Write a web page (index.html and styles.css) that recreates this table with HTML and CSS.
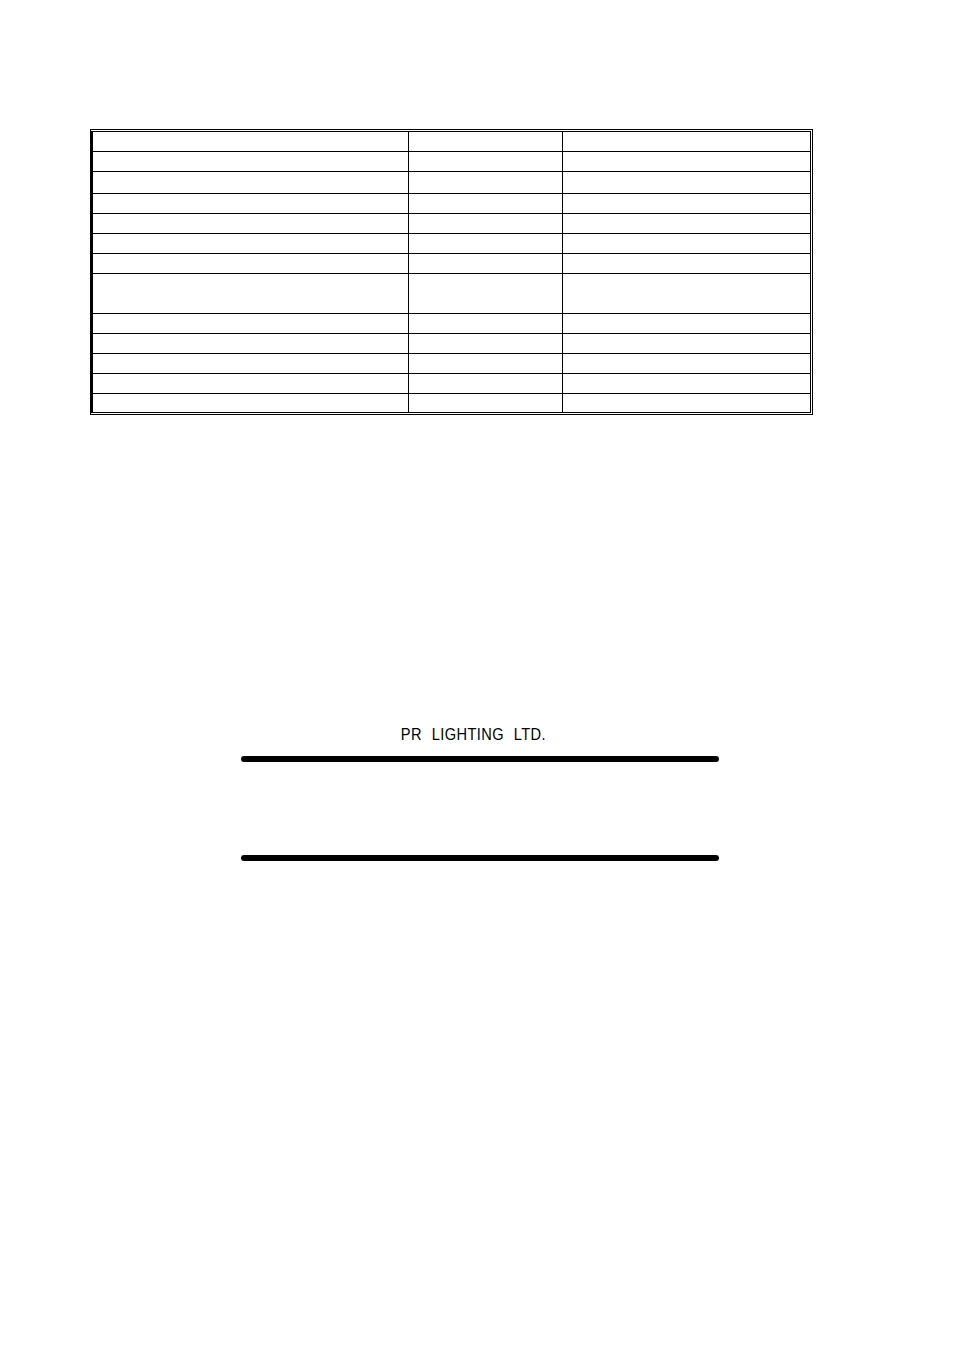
FILE: index.html
```html
<!DOCTYPE html>
<html>
<head>
<meta charset="utf-8">
<link rel="stylesheet" href="styles.css">
</head>
<body>
<div class="frame">
  <div class="grid">
    <div class="row r19"><div class="c1"></div><div class="c2"></div><div class="c3"></div></div>
    <div class="row r19"><div class="c1"></div><div class="c2"></div><div class="c3"></div></div>
    <div class="row r21"><div class="c1"></div><div class="c2"></div><div class="c3"></div></div>
    <div class="row r19"><div class="c1"></div><div class="c2"></div><div class="c3"></div></div>
    <div class="row r19"><div class="c1"></div><div class="c2"></div><div class="c3"></div></div>
    <div class="row r19"><div class="c1"></div><div class="c2"></div><div class="c3"></div></div>
    <div class="row r19"><div class="c1"></div><div class="c2"></div><div class="c3"></div></div>
    <div class="row r39"><div class="c1"></div><div class="c2"></div><div class="c3"></div></div>
    <div class="row r19"><div class="c1"></div><div class="c2"></div><div class="c3"></div></div>
    <div class="row r19"><div class="c1"></div><div class="c2"></div><div class="c3"></div></div>
    <div class="row r19"><div class="c1"></div><div class="c2"></div><div class="c3"></div></div>
    <div class="row r19"><div class="c1"></div><div class="c2"></div><div class="c3"></div></div>
    <div class="row r18"><div class="c1"></div><div class="c2"></div><div class="c3"></div></div>
  </div>
</div>
<div class="company"><span class="company-name">PR LIGHTING LTD.</span></div>
<div class="bar bar-top"></div>
<div class="bar bar-bottom"></div>
</body>
</html>
```
FILE: styles.css
```css
html, body {
  margin: 0;
  padding: 0;
  background: #fff;
}
body {
  width: 954px;
  height: 1351px;
  font-family: "Liberation Sans", Arial, sans-serif;
  color: #000;
}
.frame {
  margin: 129px 0 0 90px;
  width: 723px;
  box-sizing: border-box;
  border: 1px solid #000;
  padding: 1px 1px 1px 0;
}
.grid {
  border-top: 1px solid #000;
  border-left: 2px solid #000;
  border-right: 1px solid #000;
}
.row {
  display: grid;
  grid-template-columns: 316px 154px 1fr;
  border-bottom: 1px solid #000;
}
.r18 { height: 18px; }
.r19 { height: 19px; }
.r21 { height: 21px; }
.r39 { height: 39px; }
.c1, .c2 {
  border-right: 1px solid #000;
}
.company {
  margin-top: 310px;
  padding-right: 8px;
  text-align: center;
  font-size: 17px;
  line-height: 20px;
}
.company-name {
  display: inline-block;
  letter-spacing: 0.5px;
  word-spacing: 6px;
  transform: scaleX(0.86);
}
.bar {
  margin-left: 241px;
  width: 478px;
  height: 6px;
  border-radius: 3px;
  background: #000;
}
.bar-top {
  margin-top: 11px;
}
.bar-bottom {
  margin-top: 93px;
}
```
